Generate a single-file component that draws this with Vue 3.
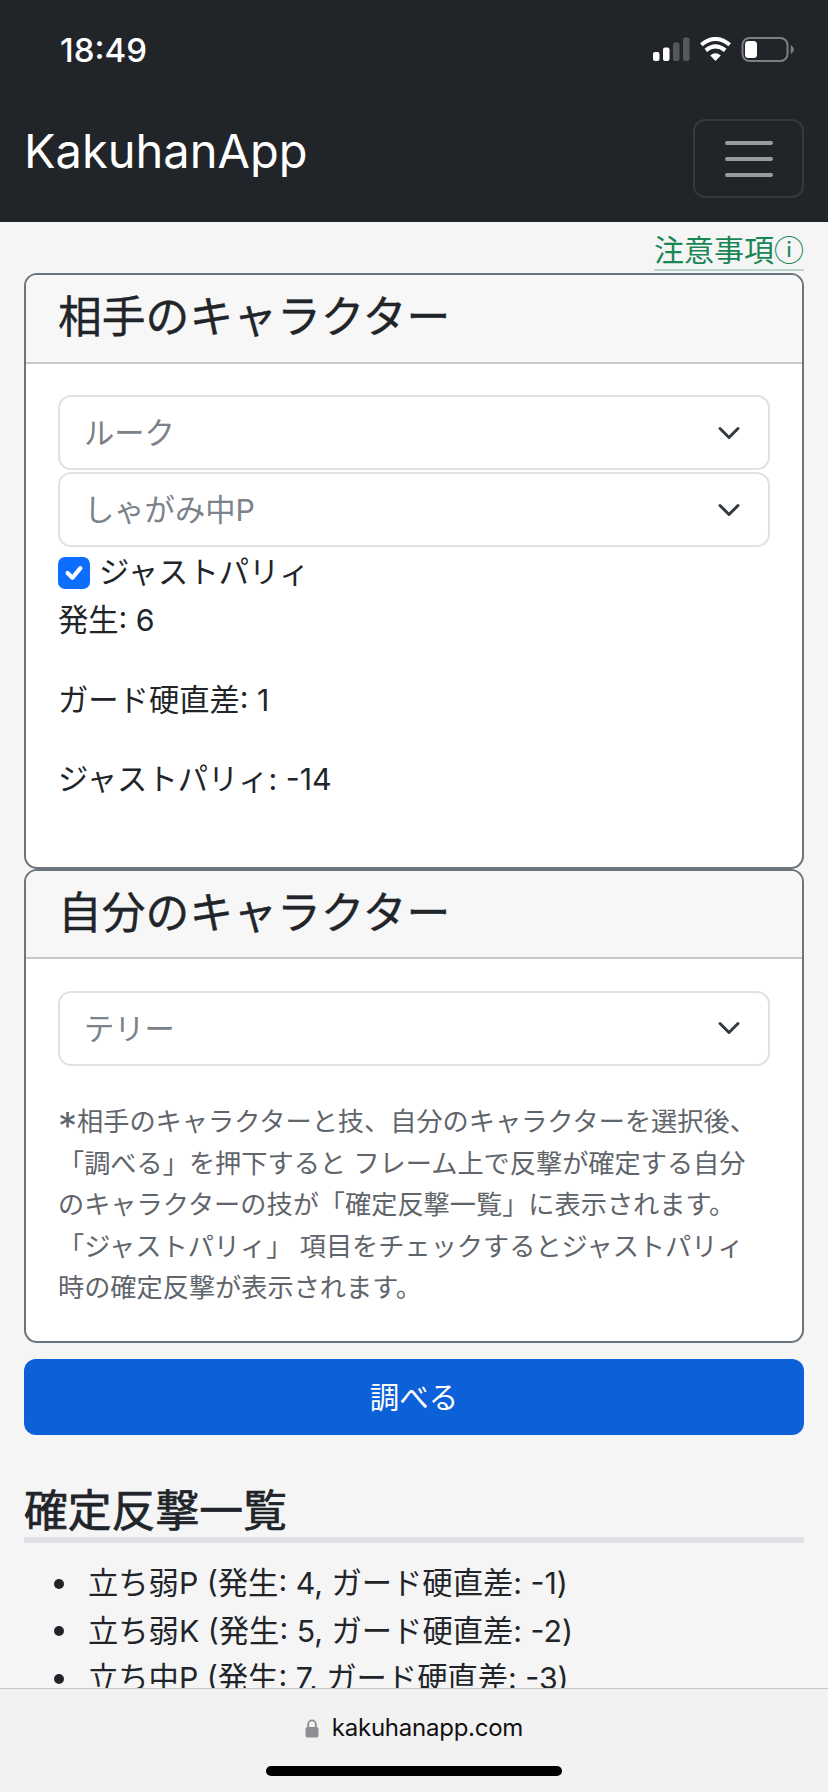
<script setup>
const attacks = [
  '立ち弱P (発生: 4, ガード硬直差: -1)',
  '立ち弱K (発生: 5, ガード硬直差: -2)',
  '立ち中P (発生: 7, ガード硬直差: -3)',
]
const stats = ['発生: 6', 'ガード硬直差: 1', 'ジャストパリィ: -14']
const noteLines = [
  '相手のキャラクターと技、自分のキャラクターを選択後、',
  '「調べる」を押下すると フレーム上で反撃が確定する自分',
  'のキャラクターの技が「確定反撃一覧」に表示されます。',
  '「ジャストパリィ」 項目をチェックするとジャストパリィ',
  '時の確定反撃が表示されます。',
]
</script>

<template>
  <div class="screen">
    <header class="top">
      <div class="status">
        <span class="time">18:49</span>
        <svg class="status-icons" viewBox="0 0 141 25" width="141" height="25">
          <rect x="0" y="15" width="6.5" height="9" rx="2" fill="#fff" />
          <rect x="10" y="10.5" width="6.5" height="13.5" rx="2" fill="#fff" />
          <rect x="20" y="5.5" width="6.5" height="18.5" rx="2" fill="#54575b" />
          <rect x="30" y="0.5" width="6.5" height="23.5" rx="2" fill="#54575b" />
          <path d="M62.5 24 L57.2 18.4 Q62.5 14 67.8 18.4 Z" fill="#fff" />
          <path d="M52.8 13.4 Q62.5 5.4 72.2 13.4" fill="none" stroke="#fff" stroke-width="4" />
          <path d="M48.3 7.8 Q62.5 -3.8 76.7 7.8" fill="none" stroke="#fff" stroke-width="4" />
          <rect x="89.5" y="1" width="45" height="23" rx="7" fill="none" stroke="#7c7e81" stroke-width="2" />
          <rect x="92" y="4" width="12" height="17" rx="3.5" fill="#fff" />
          <path d="M137.7 8 Q141 10 141 12.5 Q141 15 137.7 17 Z" fill="#7c7e81" />
        </svg>
      </div>
      <nav class="navbar">
        <span class="brand">KakuhanApp</span>
        <button class="toggler" type="button" aria-label="メニュー">
          <span class="bar"></span>
          <span class="bar"></span>
          <span class="bar"></span>
        </button>
      </nav>
    </header>

    <main class="content">
      <div class="note-row">
        <a class="note-link">注意事項ⓘ</a>
      </div>

      <section class="card">
        <h2 class="card-title">相手のキャラクター</h2>
        <div class="card-body first-body">
          <div class="select">
            <span>ルーク</span>
            <svg class="chevron" viewBox="0 0 16 16"><path d="m2 5 6 6 6-6" /></svg>
          </div>
          <div class="select">
            <span>しゃがみ中P</span>
            <svg class="chevron" viewBox="0 0 16 16"><path d="m2 5 6 6 6-6" /></svg>
          </div>
          <label class="check-row">
            <span class="checkbox">
              <svg viewBox="0 0 20 20" width="32" height="32"><path d="m6 10 3 3 5-6" /></svg>
            </span>
            <span>ジャストパリィ</span>
          </label>
          <p v-for="s in stats" :key="s" class="stat">{{ s }}</p>
        </div>
      </section>

      <section class="card">
        <h2 class="card-title">自分のキャラクター</h2>
        <div class="card-body">
          <div class="select">
            <span>テリー</span>
            <svg class="chevron" viewBox="0 0 16 16"><path d="m2 5 6 6 6-6" /></svg>
          </div>
          <p class="hint">
            <span v-for="(l, i) in noteLines" :key="l" class="hint-line"><span v-if="i === 0" class="star">*</span>{{ l }}</span>
          </p>
        </div>
      </section>

      <button class="search" type="button">調べる</button>

      <h3 class="result-title">確定反撃一覧</h3>
      <ul class="result-list">
        <li v-for="a in attacks" :key="a">{{ a }}</li>
      </ul>
    </main>

    <footer class="safari">
      <div class="address">
        <svg viewBox="0 0 14 19" width="14" height="19" class="lock">
          <path d="M3.2 8.5V5.2a3.8 3.8 0 0 1 7.6 0v3.3" fill="none" stroke="#8e8e93" stroke-width="1.8" />
          <rect x="0.5" y="8" width="13" height="10.5" rx="2" fill="#8e8e93" />
        </svg>
        <span>kakuhanapp.com</span>
      </div>
      <div class="home-indicator"></div>
    </footer>
  </div>
</template>

<style>
html, body { margin: 0; padding: 0; background: #f5f5f6; }
</style>

<style scoped>
.screen {
  position: relative;
  width: 828px;
  height: 1792px;
  overflow: hidden;
  background: #f5f5f6;
  color: #212529;
  font-family: Inter, "Noto Sans CJK JP", sans-serif;
  font-size: 30.3px;
  line-height: 47.5px;
}
.top { background: #212529; height: 222px; box-sizing: border-box; }
.status {
  height: 103px;
  box-sizing: border-box;
  padding: 37px 34px 0 60px;
  display: flex;
  justify-content: space-between;
  align-items: flex-start;
}
.time {
  color: #fff;
  font-size: 33px;
  font-weight: 500;
  line-height: 26px;
}
.status-icons { display: block; }
.navbar {
  display: flex;
  justify-content: space-between;
  align-items: flex-start;
  padding: 16px 24px 0 24px;
}
.brand {
  color: #fff;
  font-size: 47px;
  line-height: 60px;
  margin-top: 2px;
}
.toggler {
  width: 111px;
  height: 79px;
  box-sizing: border-box;
  border: 2px solid #35393d;
  border-radius: 12px;
  background: transparent;
  padding: 0;
  display: flex;
  flex-direction: column;
  align-items: center;
  justify-content: center;
  gap: 12px;
}
.bar { width: 48px; height: 4px; border-radius: 3px; background: #9a9c9e; }

.content { padding: 0 24px; }
.note-row { display: flex; justify-content: flex-end; height: 51px; }
.note-link {
  color: #198754;
  height: 47px;
  border-bottom: 2px solid #b9d6c8;
  line-height: 57px;
  font-size: 30px;
  white-space: nowrap;
}
.card {
  background: #fff;
  border: 2px solid #6c757d;
  border-radius: 13px;
  overflow: hidden;
}
.card-title {
  margin: 0;
  height: 88.5px;
  box-sizing: border-box;
  background: #f7f7f7;
  border-bottom: 2px solid #c9c9c9;
  padding: 0 32px;
  font-size: 43.8px;
  line-height: 85px;
  font-weight: 400;
  -webkit-text-stroke: 0.35px #212529;
}
.card-body { padding: 31.5px 32px 0; }
.first-body { padding-bottom: 31px; }
.select {
  height: 75px;
  box-sizing: border-box;
  border: 2px solid #dee2e6;
  border-radius: 13px;
  background: #fff;
  color: #7b8289;
  display: flex;
  align-items: center;
  justify-content: space-between;
  padding: 0 27px 0 24px;
  margin-bottom: 2px;
}
.select span { padding-top: 3px; }
.chevron {
  width: 24px;
  height: 24px;
  fill: none;
  stroke: #343a40;
  stroke-width: 2;
  stroke-linecap: round;
  stroke-linejoin: round;
}
.check-row {
  display: flex;
  align-items: center;
  gap: 9px;
  height: 48px;
}
.checkbox {
  width: 32px;
  height: 32px;
  border-radius: 7px;
  background: #0d6efd;
  display: block;
}
.checkbox svg { display: block; fill: none; stroke: #fff; stroke-width: 2.6; stroke-linecap: round; stroke-linejoin: round; }
.stat { margin: 0 0 32px; line-height: 47.5px; }
.hint {
  margin: 35.5px 0 0;
  padding-bottom: 32px;
  color: #5f656b;
  font-size: 26.2px;
  line-height: 41.5px;
  white-space: nowrap;
}
.hint-line { display: block; }
.star {
  font-size: 38px;
  line-height: 0;
  vertical-align: -9px;
}
.search {
  display: block;
  width: 100%;
  height: 76px;
  margin-top: 16px;
  border: 0;
  border-radius: 12px;
  background: #0c60d8;
  color: #fff;
  font: inherit;
  font-size: 29.5px;
  padding: 3px 0 0;
}
.result-title {
  margin: 45px 0 0;
  height: 63px;
  box-sizing: border-box;
  border-bottom: 6px solid #dfe1e7;
  font-size: 43.8px;
  line-height: 64px;
  font-weight: 400;
  -webkit-text-stroke: 0.7px #212529;
}
.result-list {
  margin: 17.5px 0 0;
  padding: 0 0 0 30px;
  list-style: none;
}
.result-list li {
  display: flex;
  align-items: center;
  line-height: 47.5px;
  white-space: nowrap;
}
.result-list li::before {
  content: "";
  flex: none;
  width: 10px;
  height: 10px;
  margin-right: 24px;
  border-radius: 50%;
  background: #212529;
}

.safari {
  position: absolute;
  left: 0;
  right: 0;
  bottom: 0;
  height: 104px;
  box-sizing: border-box;
  background: #f2f2f3;
  border-top: 1px solid #c6c6c8;
  display: flex;
  flex-direction: column;
  align-items: center;
  padding-top: 26px;
}
.address {
  display: flex;
  align-items: center;
  gap: 13px;
  height: 26px;
  font-size: 24px;
  letter-spacing: -0.25px;
  line-height: 26px;
  color: #111;
}
.lock { display: block; }
.home-indicator {
  width: 296px;
  height: 10px;
  margin-top: 25px;
  border-radius: 5px;
  background: #000;
}
</style>
